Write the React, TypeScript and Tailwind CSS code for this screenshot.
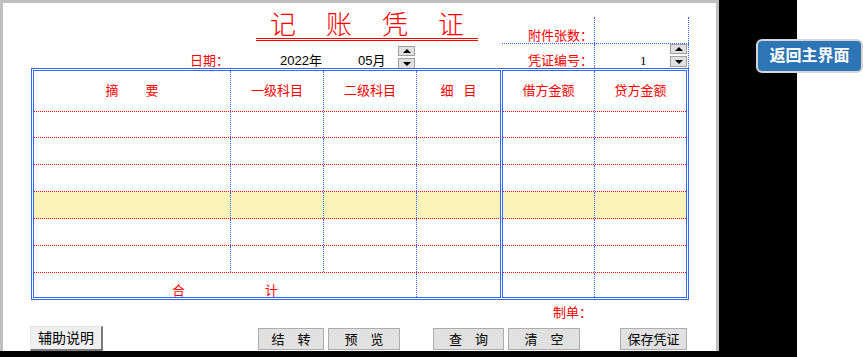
const vBlue = '[border-left:1px_dotted_#3366ff]'
const leftCols = 'grid grid-cols-[196px_93px_93px_84px]'
const rightCols = 'grid grid-cols-[91px_92px]'

function RedLine() {
  return <div className="h-px shrink-0 bg-[repeating-linear-gradient(90deg,#ff0000_0_1px,transparent_1px_2px)]" />
}

function BlueLine() {
  return <div className="h-px shrink-0 bg-[repeating-linear-gradient(90deg,#3366ff_0_1px,transparent_1px_2px)]" />
}

function SpinBtn({ up }: { up?: boolean }) {
  return (
    <div
      className={`flex w-[17px] items-center justify-center border border-[#a0a0a0] bg-[#e0e0e0] ${
        up ? 'h-[10px]' : 'h-[11px]'
      }`}
    >
      <svg width="8" height="4" viewBox="0 0 8 4">
        <path d={up ? 'M0 4 L4 0 L8 4Z' : 'M0 0 L8 0 L4 4Z'} fill="#000" />
      </svg>
    </div>
  )
}

function Spinner() {
  return (
    <div className="flex flex-col gap-[2px]">
      <SpinBtn up />
      <SpinBtn />
    </div>
  )
}

function Head({ children, gap = 0, line = false }: { children: string[]; gap?: number; line?: boolean }) {
  const g = gap === 27 ? 'gap-[27px]' : gap === 10 ? 'gap-[10px]' : 'gap-0'
  return (
    <div className={`flex items-center justify-center ${g} ${line ? vBlue : ''}`}>
      {children.map((c) => (
        <span key={c}>{c}</span>
      ))}
    </div>
  )
}

function Button({ label, w }: { label: string; w: string }) {
  return (
    <div
      className={`mt-[2px] flex h-[22px] items-center justify-center border border-[#adadad] bg-[#e1e1e1] text-[13px] leading-[13px] text-black ${w}`}
    >
      {label}
    </div>
  )
}

export default function App() {
  const rows = [0, 1, 2, 3, 4, 5]

  return (
    <div className="relative flex h-[357px] w-[863px] bg-white font-['Liberation_Sans','Noto_Sans_CJK_SC',sans-serif]">
      <div className="h-full w-[797px] bg-black">
        <div className="flex h-[351px] w-[719px] flex-col border-x-[3px] border-t-[3px] border-[#c0c0c0] bg-white">
          {/* header */}
          <div className="flex h-[65px]">
            <div className="flex w-[499px] flex-col">
              <div className="h-[41px] pl-[253px] pt-[9px]">
                <div className="inline-flex gap-[30px] border-b-[3px] border-double border-[#ff0000] px-[14px] text-[26px] font-light leading-[26px] text-[#ff0000]">
                  <span>记</span>
                  <span>账</span>
                  <span>凭</span>
                  <span>证</span>
                </div>
              </div>
              <div className="flex h-[24px] items-end pl-[187px] text-[13px] leading-[14px]">
                <span className="w-[90px] text-[#ff0000]">日期：</span>
                <span className="w-[78px] text-black">2022年</span>
                <span className="w-[40px] text-black">05月</span>
                <div className="mb-[-1px]">
                  <Spinner />
                </div>
              </div>
            </div>
            <div className="mt-[14px] flex w-[187px] flex-col text-[13px] leading-[14px]">
              <div className="flex h-[26px]">
                <div className="flex w-[92px] items-end pl-[26px] text-[#ff0000]">附件张数：</div>
                <div className="w-[95px] [border-left:1px_dotted_#3366ff] [border-right:1px_dotted_#3366ff]" />
              </div>
              <BlueLine />
              <div className="flex h-[24px]">
                <div className="flex w-[92px] items-end pl-[26px] text-[#ff0000]">凭证编号：</div>
                <div className="flex w-[95px] items-end justify-between pl-[45px] pr-px [border-left:1px_dotted_#3366ff] [border-right:1px_dotted_#3366ff]">
                  <span className="font-['Liberation_Serif',serif] text-black">1</span>
                  <div className="mb-px">
                    <Spinner />
                  </div>
                </div>
              </div>
            </div>
          </div>

          {/* table */}
          <div className="ml-[28px] flex h-[232px] w-[658px] gap-px border border-[#3366ff] p-px text-[13px] leading-[14px] text-[#ff0000]">
            <div className="flex h-full w-[468px] flex-col border border-[#3366ff]">
              <div className={`${leftCols} h-[40px]`}>
                <Head gap={27}>{['摘', '要']}</Head>
                <Head line>{['一级科目']}</Head>
                <Head line>{['二级科目']}</Head>
                <Head line gap={10}>{['细', '目']}</Head>
              </div>
              <RedLine />
              {rows.map((i) => (
                <div key={i} className={`flex flex-col ${i === 3 ? 'bg-[#faf3b8]' : ''}`}>
                  <div className={`${leftCols} ${i === 0 ? 'h-[25px]' : 'h-[26px]'}`}>
                    <div />
                    <div className={vBlue} />
                    <div className={vBlue} />
                    <div className={vBlue} />
                  </div>
                  <RedLine />
                </div>
              ))}
              <div className="grid flex-1 grid-cols-[382px_84px]">
                <div className="flex items-end justify-center gap-[80px] leading-[12px]">
                  <span>合</span>
                  <span>计</span>
                </div>
                <div className={vBlue} />
              </div>
            </div>
            <div className="flex h-full w-[185px] flex-col border border-[#3366ff]">
              <div className={`${rightCols} h-[40px]`}>
                <Head>{['借方金额']}</Head>
                <Head line>{['贷方金额']}</Head>
              </div>
              <RedLine />
              {rows.map((i) => (
                <div key={i} className={`flex flex-col ${i === 3 ? 'bg-[#faf3b8]' : ''}`}>
                  <div className={`${rightCols} ${i === 0 ? 'h-[25px]' : 'h-[26px]'}`}>
                    <div />
                    <div className={vBlue} />
                  </div>
                  <RedLine />
                </div>
              ))}
              <div className={`${rightCols} flex-1`}>
                <div />
                <div className={vBlue} />
              </div>
            </div>
          </div>

          {/* footer */}
          <div className="mt-[6px] pl-[550px] text-[13px] leading-[13px] text-[#ff0000]">制单：</div>
          <div className="mt-[7px] flex items-start">
            <div className="ml-[27px] flex h-[25px] w-[73px] items-center justify-center border-l border-t border-b-2 border-r-2 border-l-[#e6e6e6] border-t-[#e6e6e6] border-b-[#7a7a7a] border-r-[#7a7a7a] bg-[#f0f0f0] text-[14px] leading-[14px] text-black">
              辅助说明
            </div>
            <div className="ml-[155px]">
              <Button label="结　转" w="w-[66px]" />
            </div>
            <div className="ml-[4px]">
              <Button label="预　览" w="w-[72px]" />
            </div>
            <div className="ml-[33px]">
              <Button label="查　询" w="w-[71px]" />
            </div>
            <div className="ml-[4px]">
              <Button label="清　空" w="w-[72px]" />
            </div>
            <div className="ml-[40px]">
              <Button label="保存凭证" w="w-[67px]" />
            </div>
          </div>
        </div>
      </div>

      <button className="absolute left-[756px] top-[39px] flex h-[34px] w-[107px] items-center justify-center rounded-[6px] border-2 border-[#d6d6d6] bg-[#2e75b6] text-[16px] font-bold leading-[16px] text-white">
        返回主界面
      </button>
    </div>
  )
}
